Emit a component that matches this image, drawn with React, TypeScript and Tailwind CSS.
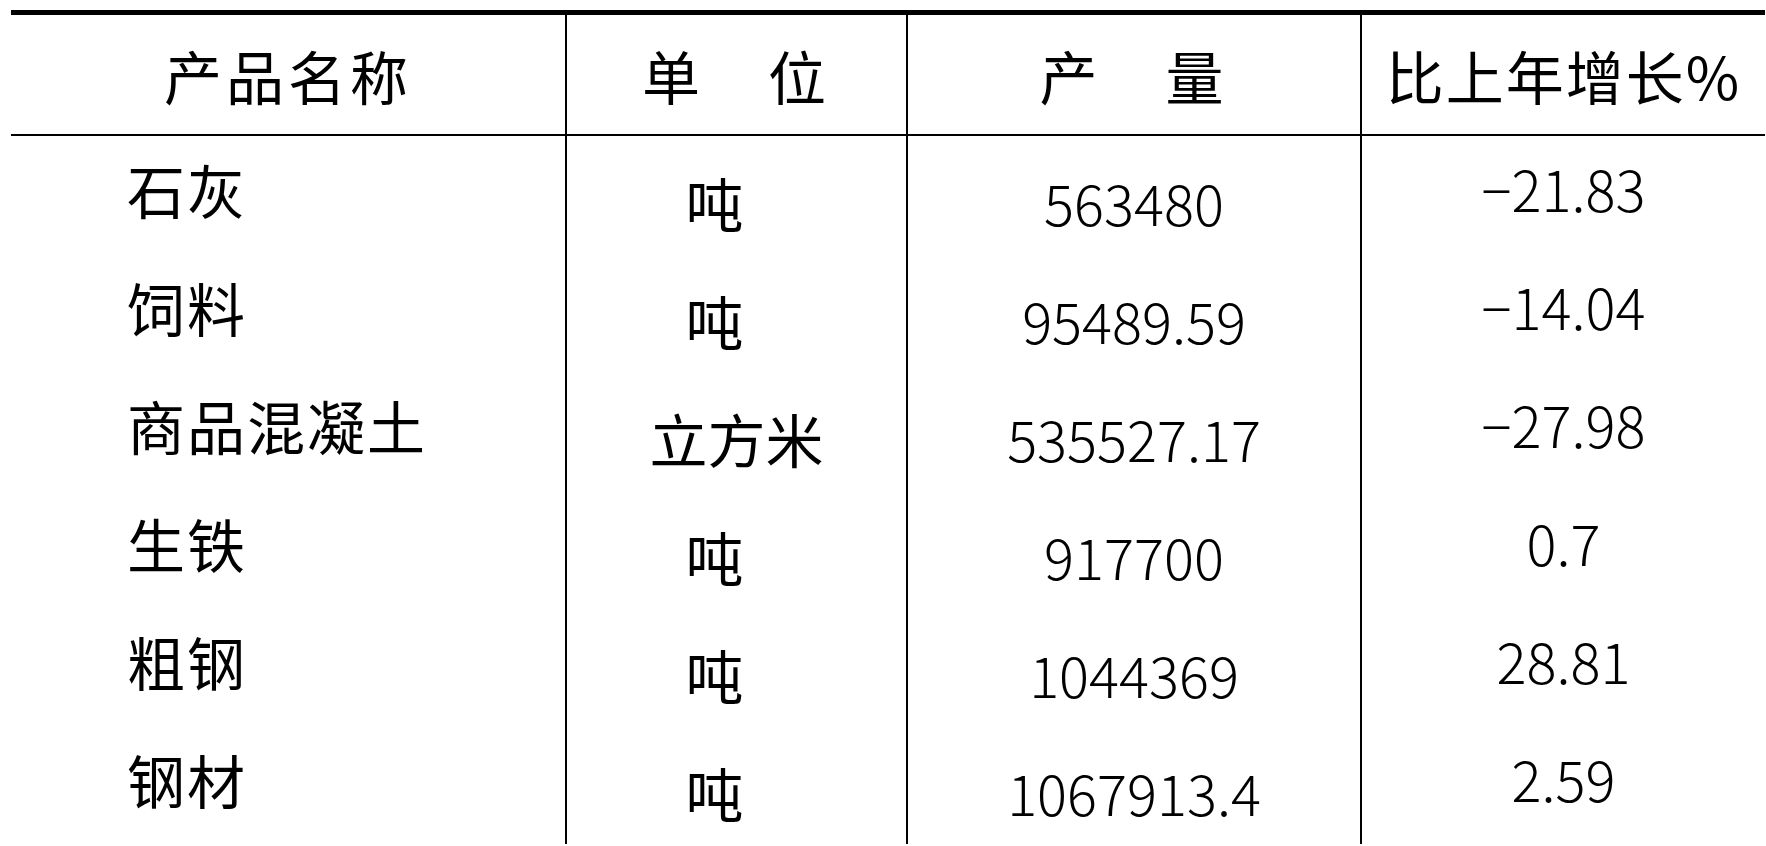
const rows = [
  { name: "石灰", unit: "吨", qty: "563480", growth: "−21.83" },
  { name: "饲料", unit: "吨", qty: "95489.59", growth: "−14.04" },
  { name: "商品混凝土", unit: "立方米", qty: "535527.17", growth: "−27.98" },
  { name: "生铁", unit: "吨", qty: "917700", growth: "0.7" },
  { name: "粗钢", unit: "吨", qty: "1044369", growth: "28.81" },
  { name: "钢材", unit: "吨", qty: "1067913.4", growth: "2.59" },
]

const cols = "grid grid-cols-[554px_341px_454px_405px]"

export default function App() {
  return (
    <div className="w-[1766px] h-[846px] bg-white pt-[10px] pl-[11px] text-black font-['Noto_Sans_CJK_SC','Noto_Sans',sans-serif] overflow-hidden">
      <div className="w-[1754px] border-t-[5px] border-black">
        <div className={`${cols} h-[121px] border-b-2 border-black text-[58px] leading-none`}>
          <div className="flex items-center justify-center tracking-[4px]">产品名称</div>
          <div className="flex items-center justify-center border-l-2 border-black tracking-[5px]">单　位</div>
          <div className="flex items-center justify-center border-l-2 border-black tracking-[5px]">产　量</div>
          <div className="flex items-center justify-center border-l-2 border-black tracking-[2px]">比上年增长%</div>
        </div>
        {rows.map((r) => (
          <div key={r.name} className={`${cols} h-[118px] text-[58px] leading-none`}>
            <div className="flex items-center pl-[116px] pb-[12px] tracking-[2px]">{r.name}</div>
            <div className="flex items-center justify-center border-l-2 border-black pt-[14px]">
              <span className={r.unit === "吨" ? "mr-[44px]" : ""}>{r.unit}</span>
            </div>
            <div className="flex items-center justify-center border-l-2 border-black pt-[14px] text-[56px] font-light">{r.qty}</div>
            <div className="flex items-center justify-center border-l-2 border-black pb-[14px] text-[56px] font-light">{r.growth}</div>
          </div>
        ))}
      </div>
    </div>
  )
}
